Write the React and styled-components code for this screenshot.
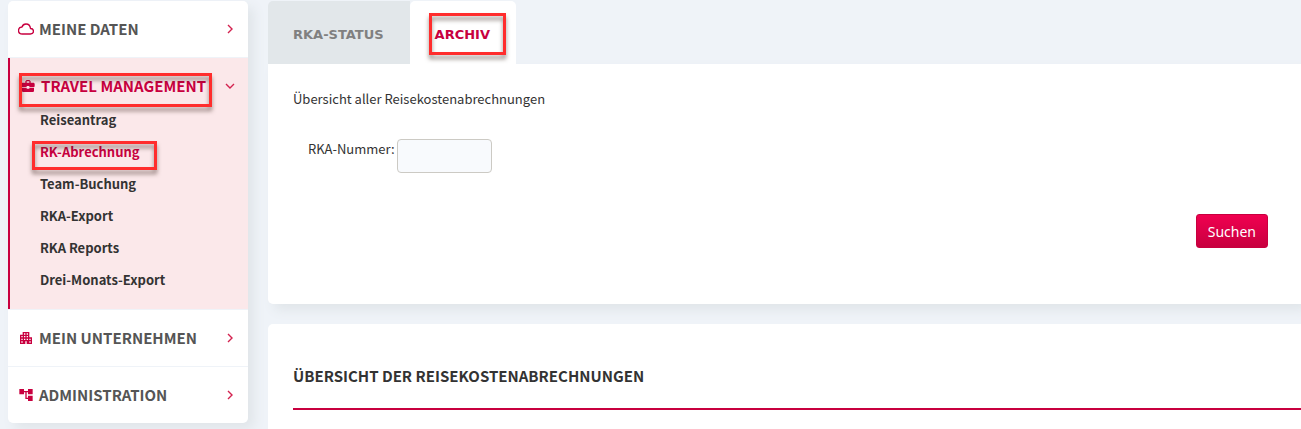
import React, { useState } from "react";
import styled, { createGlobalStyle, css } from "styled-components";
import { IoCloudOutline } from "react-icons/io5";
import { MdAccountTree, MdApartment, MdBusinessCenter } from "react-icons/md";

const travelLinks = [
  "Reiseantrag",
  "RK-Abrechnung",
  "Team-Buchung",
  "RKA-Export",
  "RKA Reports",
  "Drei-Monats-Export",
];

const Chevron = ({ open }) => (
  <ChevronIcon viewBox="0 0 10 10" aria-hidden="true">
    <path d={open ? "M1 3L5 7L9 3" : "M3 1L7 5L3 9"} />
  </ChevronIcon>
);

const App = () => {
  const [number, setNumber] = useState("");

  return (
    <Page>
      <GlobalStyle />
      <Sidebar>
        <MenuItem>
          <MenuButton type="button">
            <CloudIcon size={16} />
            <span>MEINE DATEN</span>
            <Chevron />
          </MenuButton>
        </MenuItem>
        <MenuItem $open>
          <MenuButton type="button" $open aria-expanded="true">
            <MdBusinessCenter size={16} />
            <span>TRAVEL MANAGEMENT</span>
            <Chevron open />
          </MenuButton>
          <Marker $top={15} $left={11} $width={193} $height={34} />
          <SubMenu>
            {travelLinks.map((label) => {
              const active = label === "RK-Abrechnung";
              return (
                <SubItem key={label}>
                  <SubLink href="#" $active={active}>
                    {label}
                  </SubLink>
                  {active && (
                    <Marker $top={5} $left={-8} $width={125} $height={29} />
                  )}
                </SubItem>
              );
            })}
          </SubMenu>
        </MenuItem>
        <MenuItem>
          <MenuButton type="button">
            <MdApartment size={16} />
            <span>MEIN UNTERNEHMEN</span>
            <Chevron />
          </MenuButton>
        </MenuItem>
        <MenuItem>
          <MenuButton type="button">
            <MdAccountTree size={16} />
            <span>ADMINISTRATION</span>
            <Chevron />
          </MenuButton>
        </MenuItem>
      </Sidebar>

      <Main>
        <section>
          <Tabs>
            <Tab type="button">RKA-STATUS</Tab>
            <Tab type="button" $active>
              ARCHIV
              <Marker $top={12} $left={19} $width={77} $height={42} />
            </Tab>
          </Tabs>
          <SearchPanel>
            <p>Übersicht aller Reisekostenabrechnungen</p>
            <Field>
              <label htmlFor="rka-nummer">RKA-Nummer:</label>
              <TextInput
                id="rka-nummer"
                type="text"
                value={number}
                onChange={(e) => setNumber(e.target.value)}
              />
            </Field>
            <Actions>
              <SearchButton type="button">Suchen</SearchButton>
            </Actions>
          </SearchPanel>
        </section>
        <ResultPanel>
          <Title>ÜBERSICHT DER REISEKOSTENABRECHNUNGEN</Title>
        </ResultPanel>
      </Main>
    </Page>
  );
};

export default App;

const GlobalStyle = createGlobalStyle`
  * {
    box-sizing: border-box;
  }

  body {
    margin: 0;
    background-color: #eff3f8;
    color: #333333;
    font-family: "Noto Sans CJK SC", "Noto Sans", sans-serif;
    font-size: 13px;
    line-height: 20px;
  }

  button,
  input {
    font-family: inherit;
  }

  p, h2, ul {
    margin: 0;
    padding: 0;
  }
`;

const Page = styled.div`
  display: flex;
  align-items: flex-start;
  gap: 20px;
  padding: 1px 0 0 8px;
`;

const Sidebar = styled.nav`
  flex: 0 0 240px;
  overflow: hidden;
  border-radius: 5px;
  background-color: #ffffff;
  box-shadow: 6px 6px 12px #e0e5e9;
`;

const MenuItem = styled.div`
  position: relative;
  border-bottom: 1px solid #eff3f8;

  &:last-child {
    border-bottom: 0;
  }

  ${(props) =>
    props.$open &&
    css`
      padding-bottom: 13px;
      background-color: #fbe8ea;
      box-shadow: inset 2px 0 0 #c8003f;
    `}
`;

const MenuButton = styled.button`
  display: flex;
  align-items: center;
  gap: 5px;
  width: 100%;
  height: ${(props) => (props.$open ? "46px" : "56px")};
  padding: ${(props) => (props.$open ? "10px 13px 0 12px" : "0 13px 0 10px")};
  border: 0;
  background: none;
  color: ${(props) => (props.$open ? "#c8003f" : "#555555")};
  font-size: 15px;
  font-weight: 700;
  line-height: 20px;
  text-align: left;
  cursor: pointer;

  > svg {
    flex: none;
    color: #c8003f;
  }

  span {
    flex: 1;
    white-space: nowrap;
  }
`;

const CloudIcon = styled(IoCloudOutline)`
  path {
    stroke-width: 44;
  }
`;

const ChevronIcon = styled.svg`
  width: 10px;
  height: 10px;
  fill: none;
  stroke: #d3224f;
  stroke-width: 1.4;
`;

const SubMenu = styled.ul`
  padding-left: 32px;
  list-style: none;
`;

const SubItem = styled.li`
  position: relative;
  height: 32px;
`;

const SubLink = styled.a`
  color: ${(props) => (props.$active ? "#c8003f" : "#333333")};
  font-weight: 700;
  line-height: 32px;
  text-decoration: none;
`;

const Marker = styled.span`
  position: absolute;
  top: ${(props) => props.$top}px;
  left: ${(props) => props.$left}px;
  width: ${(props) => props.$width}px;
  height: ${(props) => props.$height}px;
  border: 3px solid #ff2d2d;
  filter: drop-shadow(0 4px 2px rgba(50, 30, 20, 0.5));
  pointer-events: none;
`;

const Main = styled.main`
  flex: 1;
  min-width: 0;
`;

const Tabs = styled.div`
  display: flex;
`;

const Tab = styled.button`
  position: relative;
  height: 63px;
  padding: 3px 26px 0 25px;
  border: 0;
  border-radius: ${(props) => (props.$active ? "5px 5px 0 0" : "5px 0 0 0")};
  background-color: ${(props) => (props.$active ? "#ffffff" : "#e2e7ea")};
  color: ${(props) => (props.$active ? "#c8003f" : "#808080")};
  font-family: "DejaVu Sans", sans-serif;
  font-size: 13px;
  font-weight: 700;
  cursor: pointer;
`;

const SearchPanel = styled.div`
  padding: 25px 33px 56px 25px;
  border-radius: 0 0 0 5px;
  background-color: #ffffff;
  box-shadow: 6px 6px 12px #e0e5e9;
`;

const Field = styled.div`
  display: flex;
  gap: 2px;
  padding: 30px 0 0 15px;
`;

const TextInput = styled.input`
  width: 95px;
  height: 34px;
  padding: 4px 8px;
  border: 1px solid #cccac4;
  border-radius: 4px;
  background-color: #f8fafd;
  font-size: 13px;
`;

const Actions = styled.div`
  display: flex;
  justify-content: flex-end;
  padding-top: 41px;
`;

const SearchButton = styled.button`
  height: 34px;
  padding: 0 11px;
  border: 1px solid #c8003f;
  border-radius: 3px;
  background: linear-gradient(#f00050, #c8003f);
  color: #ffffff;
  font-family: "Noto Sans", sans-serif;
  font-size: 14px;
  cursor: pointer;
`;

const ResultPanel = styled.section`
  margin-top: 20px;
  padding: 42px 0 19px 25px;
  border-radius: 5px 0 0 0;
  background-color: #ffffff;
`;

const Title = styled.h2`
  padding-bottom: 22px;
  border-bottom: 2px solid #c8003f;
  font-size: 15px;
  font-weight: 700;
  line-height: 20px;
`;
